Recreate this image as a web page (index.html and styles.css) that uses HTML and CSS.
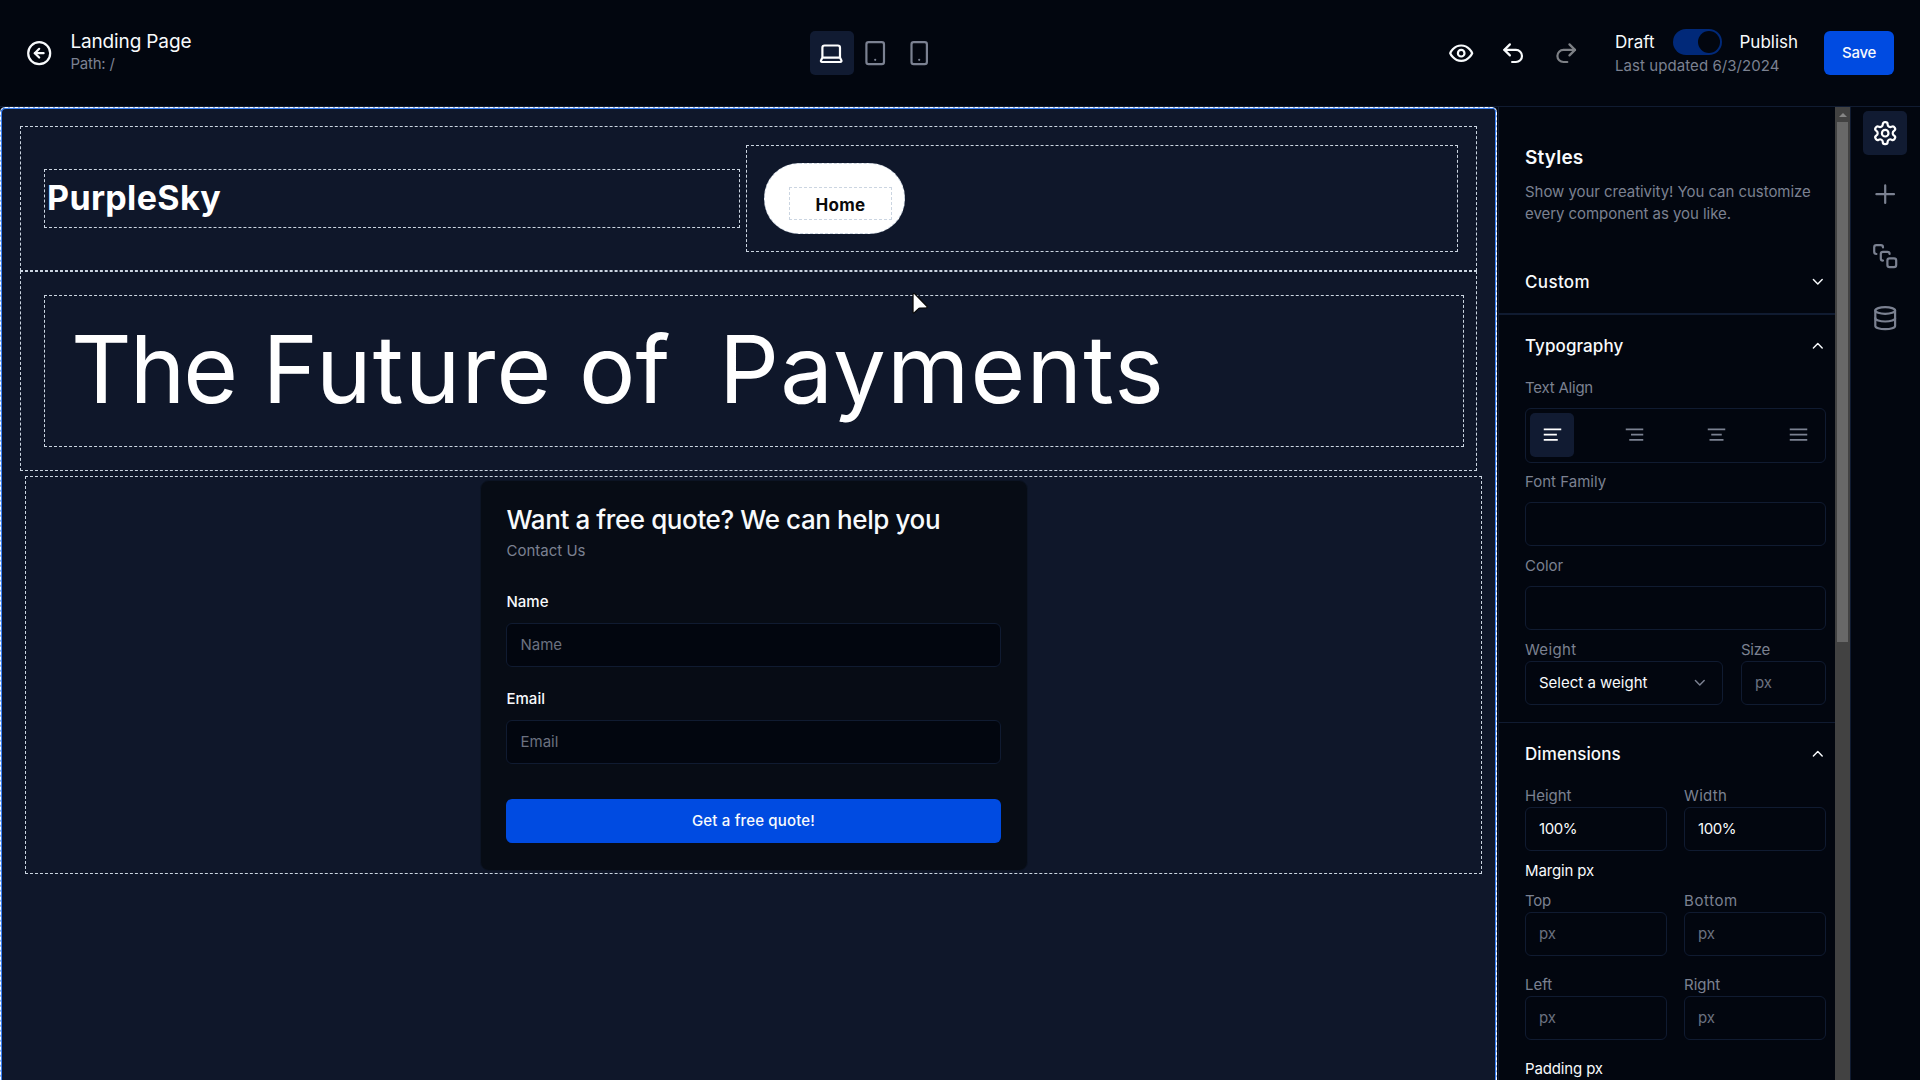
FILE: index.html
```html
<!DOCTYPE html>
<html lang="en">
<head>
<meta charset="utf-8">
<title>Landing Page</title>
<link rel="stylesheet" href="styles.css">
</head>
<body>
<header class="topbar">
  <div class="page-info">
    <svg class="icon" viewBox="0 0 24 24"><circle cx="12" cy="12" r="10"/><path d="M16 12H8"/><path d="m12 8-4 4 4 4"/></svg>
    <div class="page-text">
      <div class="page-title">Landing Page</div>
      <div class="page-path">Path: /</div>
    </div>
  </div>
  <div class="devices">
    <button class="tool active"><svg class="icon" viewBox="0 0 24 24"><path d="M20 16V7a2 2 0 0 0-2-2H6a2 2 0 0 0-2 2v9m16 0H4m16 0 1.28 2.55a1 1 0 0 1-.9 1.45H3.62a1 1 0 0 1-.9-1.45L4 16"/></svg></button>
    <button class="tool"><svg class="icon" viewBox="0 0 24 24"><rect x="4" y="2" width="16" height="20" rx="2"/><path d="M12 18h.01"/></svg></button>
    <button class="tool"><svg class="icon" viewBox="0 0 24 24"><rect x="5" y="2" width="14" height="20" rx="2"/><path d="M12 18h.01"/></svg></button>
  </div>
  <div class="actions">
    <div class="history">
      <svg class="icon" viewBox="0 0 24 24"><path d="M2 12s3-7 10-7 10 7 10 7-3 7-10 7-10-7-10-7Z"/><circle cx="12" cy="12" r="3"/></svg>
      <svg class="icon" viewBox="0 0 24 24"><path d="M9 14 4 9l5-5"/><path d="M4 9h10.500a5.500 5.500 0 0 1 0 11H11"/></svg>
      <svg class="icon dim" viewBox="0 0 24 24"><path d="m15 14 5-5-5-5"/><path d="M20 9H9.500a5.500 5.500 0 0 0 0 11H13"/></svg>
    </div>
    <div class="status">
      <div class="status-row"><span>Draft</span><span class="switch"><span class="thumb"></span></span><span>Publish</span></div>
      <div class="updated">Last updated 6/3/2024</div>
    </div>
    <button class="save">Save</button>
  </div>
</header>
<div class="workspace">
  <main class="canvas">
    <section class="block nav-block">
      <div class="brand">PurpleSky</div>
      <div class="links"><div class="pill"><div class="pill-text">Home</div></div></div>
    </section>
    <section class="block hero-block">
      <div class="hero"><span class="snug">The</span> <span class="airy">Future</span> <span class="joined">of&nbsp; </span><span class="airy">Payments</span></div>
    </section>
    <section class="block form-block">
      <div class="card">
        <h2>Want a free quote? We can help you</h2>
        <p class="muted">Contact Us</p>
        <label class="name-label">Name</label>
        <div class="field">Name</div>
        <label class="email-label">Email</label>
        <div class="field">Email</div>
        <button class="submit">Get a free quote!</button>
      </div>
    </section>
    <svg class="cursor" viewBox="0 0 20 24"><path d="M2 2.500v17.500q0 1.500 1.300.7l4-3.800q.7-.7 1.700-.8l6.200-.3q2-.2.700-1.600L4 2Q2.300.700 2 2.500Z"/></svg>
  </main>
  <aside class="panel">
    <h3>Styles</h3>
    <p class="desc">Show your creativity! You can customize<br>every component as you like.</p>
    <div class="group custom">
      <div class="group-head"><span class="wide">Custom</span><svg class="chev" viewBox="0 0 24 24"><path d="m6 9 6 6 6-6"/></svg></div>
    </div>
    <div class="group typo">
      <div class="group-head"><span>Typography</span><svg class="chev" viewBox="0 0 24 24"><path d="m18 15-6-6-6 6"/></svg></div>
      <label class="first text-align">Text Align</label>
      <div class="toggles">
        <button class="tool active"><svg viewBox="0 0 24 24"><path d="M2 6h20M2 12h15M2 18h16"/></svg></button>
        <button class="tool"><svg viewBox="0 0 24 24"><path d="M2 6h20M8 12h14M6 18h16"/></svg></button>
        <button class="tool"><svg viewBox="0 0 24 24"><path d="M2 6h20M6 12h12M4 18h16"/></svg></button>
        <button class="tool"><svg viewBox="0 0 24 24"><path d="M2 6h20M2 12h20M2 18h20"/></svg></button>
      </div>
      <label class="spaced">Font Family</label>
      <div class="field"></div>
      <label class="spaced">Color</label>
      <div class="field"></div>
      <div class="row weight-row">
        <div><label class="wide">Weight</label><div class="field select"><span>Select a weight</span><svg class="chev" viewBox="0 0 24 24"><path d="m6 9 6 6 6-6"/></svg></div></div>
        <div><label class="narrow">Size</label><div class="field">px</div></div>
      </div>
    </div>
    <div class="group">
      <div class="group-head"><span>Dimensions</span><svg class="chev" viewBox="0 0 24 24"><path d="m18 15-6-6-6 6"/></svg></div>
      <div class="row first">
        <div><label>Height</label><div class="field filled">100%</div></div>
        <div><label class="wide">Width</label><div class="field filled">100%</div></div>
      </div>
      <h4>Margin px</h4>
      <div class="row tight">
        <div><label class="narrow">Top</label><div class="field">px</div></div>
        <div><label class="wider">Bottom</label><div class="field">px</div></div>
      </div>
      <div class="row loose">
        <div><label>Left</label><div class="field">px</div></div>
        <div><label>Right</label><div class="field">px</div></div>
      </div>
      <h4 class="padding-title">Padding px</h4>
    </div>
  </aside>
  <div class="scrollbar"><span class="arrow"></span><span class="track-thumb"></span></div>
  <nav class="rail">
    <button class="tool active"><svg class="icon" viewBox="0 0 24 24"><path d="M12.220 2h-.44a2 2 0 0 0-2 2v.18a2 2 0 0 1-1 1.730l-.43.25a2 2 0 0 1-2 0l-.15-.08a2 2 0 0 0-2.730.73l-.22.38a2 2 0 0 0 .73 2.730l.15.1a2 2 0 0 1 1 1.720v.51a2 2 0 0 1-1 1.740l-.15.09a2 2 0 0 0-.73 2.730l.22.38a2 2 0 0 0 2.730.73l.15-.08a2 2 0 0 1 2 0l.43.25a2 2 0 0 1 1 1.730V20a2 2 0 0 0 2 2h.44a2 2 0 0 0 2-2v-.18a2 2 0 0 1 1-1.730l.43-.25a2 2 0 0 1 2 0l.15.08a2 2 0 0 0 2.730-.73l.22-.39a2 2 0 0 0-.73-2.730l-.15-.08a2 2 0 0 1-1-1.740v-.5a2 2 0 0 1 1-1.740l.15-.09a2 2 0 0 0 .73-2.730l-.22-.38a2 2 0 0 0-2.730-.73l-.15.08a2 2 0 0 1-2 0l-.43-.25a2 2 0 0 1-1-1.730V4a2 2 0 0 0-2-2z"/><circle cx="12" cy="12" r="3"/></svg></button>
    <button class="tool"><svg class="icon" viewBox="0 0 24 24"><path d="M4 12h16M12 4v16"/></svg></button>
    <button class="tool"><svg class="icon" viewBox="0 0 24 24"><rect x="14" y="14" width="8" height="8" rx="2"/><path d="M4 10a2 2 0 0 1-2-2V4a2 2 0 0 1 2-2h4a2 2 0 0 1 2 2"/><path d="M10 16a2 2 0 0 1-2-2v-4a2 2 0 0 1 2-2h4a2 2 0 0 1 2 2"/></svg></button>
    <button class="tool"><svg class="icon" viewBox="0 0 24 24"><ellipse cx="12" cy="5" rx="9" ry="3"/><path d="M3 5v14a9 3 0 0 0 18 0V5"/><path d="M3 12a9 3 0 0 0 18 0"/></svg></button>
  </nav>
</div>
</body>
</html>
```
FILE: styles.css
```css
:root {
  --bg: #02060f;
  --line: #101b31;
  --accent: #111b32;
  --muted: #7b8191;
  --text: #f8fafc;
  --primary: #004be1;
  --dash: #cbd5e1;
}
* { box-sizing: border-box; }
body {
  margin: 0;
  height: 1080px;
  overflow: hidden;
  display: flex;
  flex-direction: column;
  background: var(--bg);
  color: var(--text);
  font: 400 15px/22px Inter, "Open Sans", sans-serif;
}
h2, h3, h4, p { margin: 0; font-weight: 400; }
button { border: 0; padding: 0; font: inherit; color: inherit; background: none; }
label { display: block; color: var(--muted); }
svg { fill: none; stroke: currentColor; stroke-width: 2; stroke-linecap: round; stroke-linejoin: round; flex: none; }
.icon { width: 26.4px; height: 26.4px; display: block; }

/* Top bar */
.topbar {
  height: 107px;
  flex: none;
  display: grid;
  grid-template-columns: 810px 1fr auto;
  align-items: center;
  padding-right: 26px;
  border-bottom: 1px solid var(--line);
}
.page-info { display: flex; align-items: center; gap: 18px; padding-left: 26px; }
.page-text { padding-bottom: 3px; }
.page-title { font-size: 19px; line-height: 25px; letter-spacing: -.14px; }
.page-path { line-height: 20px; letter-spacing: -.2px; }
.page-path, .updated, .muted { color: var(--muted); }
.updated { letter-spacing: .07px; }
.devices { display: flex; }
.tool { width: 44px; height: 44px; display: flex; align-items: center; justify-content: center; border-radius: 5px; color: var(--muted); }
.devices .tool { padding-right: 2px; }
.tool.active { background: var(--accent); color: #fff; }
.actions { display: flex; align-items: center; }
.history { display: flex; gap: 26px; margin-right: 36px; }
.dim { opacity: .5; }
.status { width: 209px; }
.status-row { display: flex; align-items: center; font-size: 17px; line-height: 26px; }
.switch { width: 49px; height: 26px; margin: 0 18px; padding: 2px; border-radius: 13px; background: #012979; display: flex; justify-content: flex-end; }
.thumb { width: 22px; height: 22px; border-radius: 50%; background: var(--bg); }
.save { width: 70px; height: 44px; border-radius: 6px; background: var(--primary); font-weight: 500; letter-spacing: -.28px; }

/* Workspace */
.workspace { flex: 1; min-height: 0; display: flex; }
.canvas {
  position: relative;
  width: 1497px;
  flex: none;
  padding: 18px 19px 0;
  border: 1px dashed #fff;
  border-bottom: 0;
  border-radius: 5px 5px 0 0;
  background: linear-gradient(#0f172a, #0f172a) padding-box, #8fb0ea border-box;
  box-shadow: inset 1px 1px #3b82f6, inset -1px 0 #3b82f6;
}
.block, .brand, .links, .hero, .pill, .pill-text { border: 1px dashed var(--dash); }
.block { width: 1457px; }
.nav-block { height: 145px; display: flex; align-items: center; padding: 0 18px 0 23px; gap: 6px; }
.brand { width: 696px; height: 59px; padding-left: 2px; font-size: 34px; font-weight: 700; line-height: 56px; letter-spacing: .35px; color: #fff; }
.links { width: 712px; height: 107px; padding: 17px; }
.pill { width: 141px; height: 71px; padding: 23px 0 0 24px; border-radius: 35px; background: #fff; }
.pill-text { width: 103px; height: 33px; text-align: center; line-height: 34px; font-size: 17px; font-weight: 700; letter-spacing: .25px; color: #0a0a0a; }
.hero-block { height: 200px; padding: 23px; }
.hero { width: 1420px; height: 152px; padding-left: 26px; font-size: 94px; line-height: 147px; color: #fff; white-space: nowrap; }
.snug { letter-spacing: -2px; }
.airy { letter-spacing: 1.2px; }
.joined { word-spacing: -2px; }
.form-block { height: 398px; margin: 5px 0 0 5px; padding-top: 3px; }
.card {
  width: 548px;
  height: 391px;
  margin: 0 auto;
  padding: 26px 26px 0 25px;
  border: 1px solid #0c1424;
  border-radius: 9px;
  background: #070c15;
}
.card h2 { padding: 0 0 7px 1px; font-size: 26px; line-height: 26px; font-weight: 500; letter-spacing: -.4px; white-space: nowrap; }
.card .muted { padding-left: 1px; }
.card label { padding-left: 1px; color: var(--text); font-weight: 500; }
.name-label { margin: 29px 0 10px; }
.email-label { margin: 21px 0 10px; }
.field {
  height: 44px;
  padding: 0 13px;
  display: flex;
  align-items: center;
  border: 1px solid var(--line);
  border-radius: 6px;
  background: var(--bg);
  color: #6b7180;
}
.card .field { padding-left: 14px; }
.submit { display: block; width: 100%; height: 44px; margin-top: 35px; padding-left: 1px; border-radius: 6px; background: var(--primary); font-weight: 500; letter-spacing: .17px; }
.cursor { position: absolute; left: 910px; top: 184px; width: 20px; height: 24px; fill: #fff; stroke: #0a0a0a; stroke-width: 1.3; }

/* Style panel */
.panel { width: 337px; flex: none; margin-left: 1px; padding-top: 37px; border-left: 1px solid var(--line); overflow: hidden; }
.panel h3 { margin-left: 26px; font-size: 19px; line-height: 28px; font-weight: 600; letter-spacing: .19px; }
.desc { margin: 9px 0 44px 26px; color: var(--muted); letter-spacing: -.05px; white-space: nowrap; }
.group { padding: 18px 9px 17px 26px; }
.custom { padding-top: 0; padding-bottom: 18px; border-bottom: 2px solid var(--line); }
.typo { border-bottom: 1px solid var(--line); }
.group-head { display: flex; align-items: center; justify-content: space-between; font-size: 17px; line-height: 26px; font-weight: 500; letter-spacing: .08px; }
.chev { width: 17.6px; height: 17.6px; }
.group-head .chev { margin-right: -1px; }
.wide { letter-spacing: .35px; }
.wider { letter-spacing: .6px; }
.narrow { letter-spacing: -.25px; }
.text-align { letter-spacing: -.22px; }
.first { margin-top: 18px; }
.toggles { height: 55px; margin-top: 9px; padding: 4px; display: flex; justify-content: space-between; border: 1px solid var(--line); border-radius: 6px; }
.toggles .tool { padding-bottom: 1px; }
.toggles svg { width: 21px; height: 21px; stroke-linecap: butt; }
.spaced { margin: 9px 0; }
.toggles + .spaced { margin-top: 8px; }
.row { display: grid; grid-template-columns: 142px 142px; gap: 17px; }
.weight-row { grid-template-columns: 198px 85px; gap: 18px; margin-top: 9px; }
.select { justify-content: space-between; color: var(--text); }
.select .chev { color: var(--muted); }
.filled { color: var(--text); letter-spacing: -.44px; }
.panel h4 { margin-top: 9px; letter-spacing: -.14px; }
.tight { margin-top: 8px; }
.loose, .panel .padding-title { margin-top: 18px; }

.scrollbar { width: 15px; flex: none; background: #424242; display: flex; flex-direction: column; align-items: center; }
.arrow { width: 0; height: 0; margin: 6px 0 5px; border: 4px solid transparent; border-top: 0; border-bottom-color: #858585; }
.track-thumb { width: 11px; height: 520px; background: #686868; }

.rail { flex: 1; display: flex; flex-direction: column; align-items: center; gap: 17.6px; padding: 4px 1px 0 0; border-left: 1px solid var(--line); }
```
